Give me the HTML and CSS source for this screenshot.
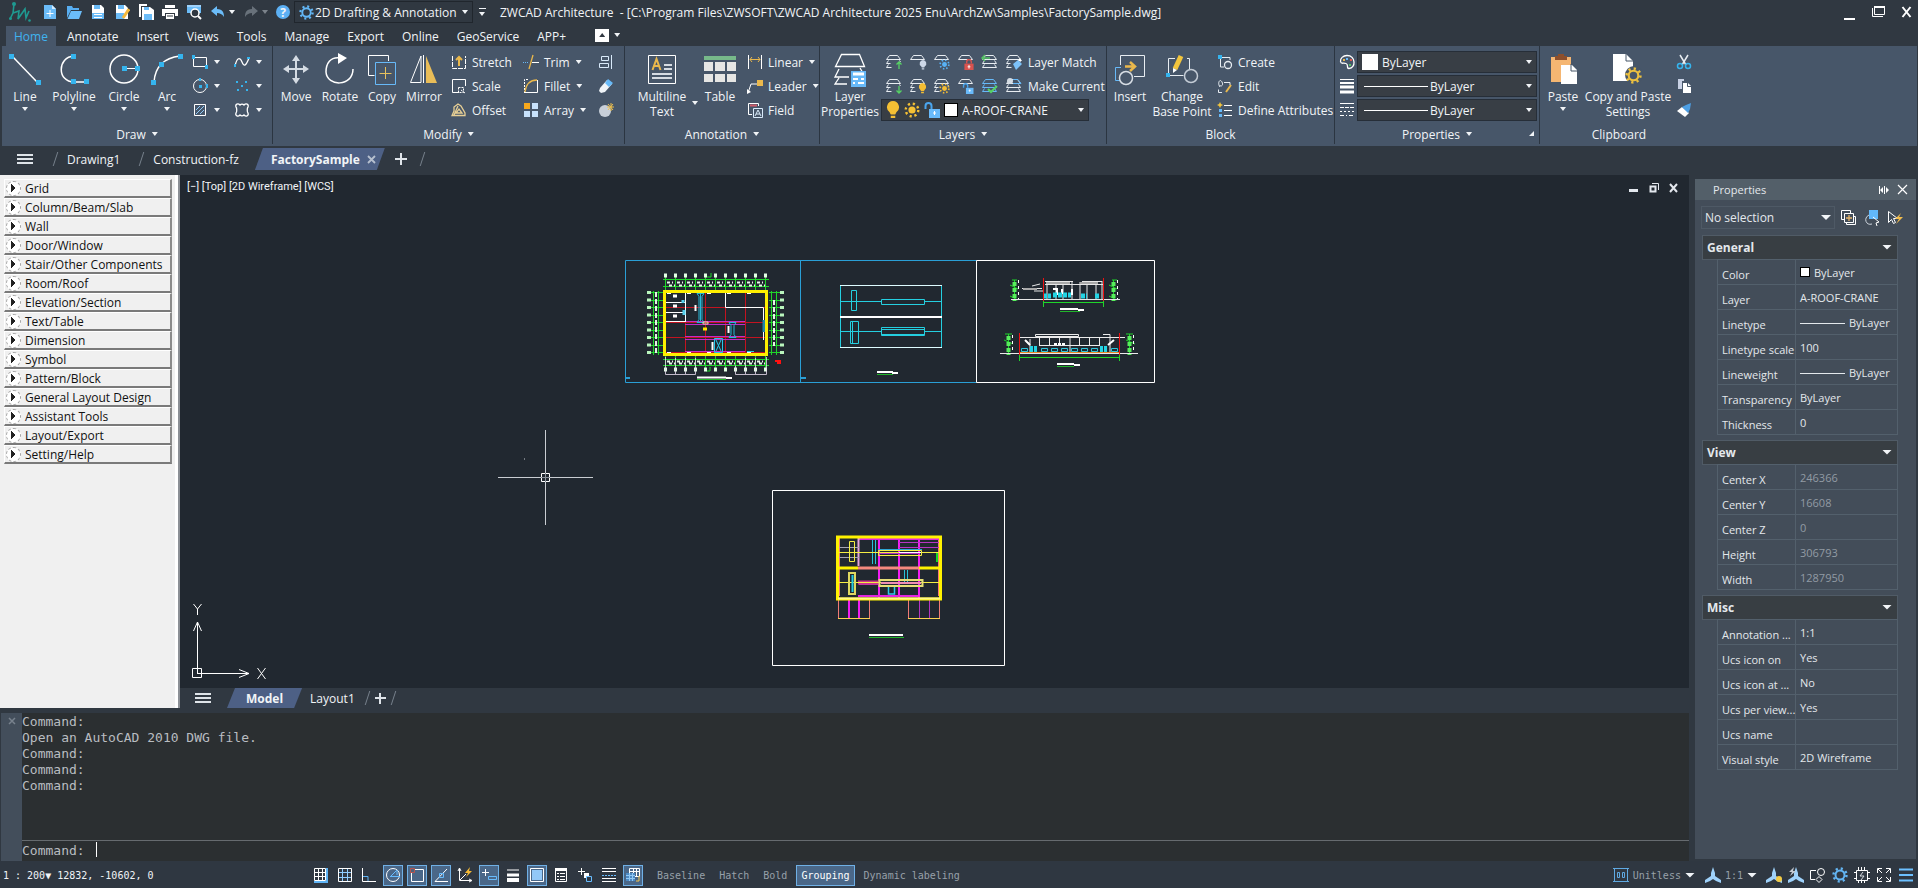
FILE: index.html
```html
<!DOCTYPE html>
<html lang="en">
<head>
    <meta charset="UTF-8">
    <meta name="viewport" content="width=device-width, initial-scale=1.0">
    <title>ZWCAD Architecture</title>
    <link rel="stylesheet" href="styles.css">
</head>
<body>
    <!-- shared symbols -->
    <svg class="defs" width="0" height="0">
        <symbol id="layers" viewBox="0 0 18 16">
            <path d="M4.5 1.5h8l3 4h-14zM3.5 6.500l-2 3h4M14.500 6.500l1 1.500M3.500 10.500l-2 3h5" fill="none" stroke="#e8edf2"/>
        </symbol>
        <symbol id="layers-full" viewBox="0 0 18 16">
            <path d="M4.500 1.500h8l3 4h-14zM3.500 6.500l-2 3h14l-2-3M3.500 10.500l-2 3h14l-2-3" fill="none" stroke="currentColor"/>
        </symbol>
        <symbol id="gear" viewBox="0 0 16 16">
            <circle cx="8" cy="8" r="4.500" fill="none" stroke="currentColor" stroke-width="2"/>
            <circle cx="8" cy="8" r="6.500" fill="none" stroke="currentColor" stroke-width="2.400" stroke-dasharray="2.100 3"/>
        </symbol>
        <symbol id="sun" viewBox="0 0 16 16">
            <circle cx="8" cy="8" r="3.600" fill="currentColor"/>
            <circle cx="8" cy="8" r="6.300" fill="none" stroke="currentColor" stroke-width="2.400" stroke-dasharray="2.200 2.750"/>
        </symbol>
        <symbol id="bulb" viewBox="0 0 12 16">
            <path d="M6 0a5.500 5.500 0 0 0-3 10l1 2h4l1-2a5.500 5.500 0 0 0-3-10zM4 13h4v2H4z" fill="currentColor"/>
        </symbol>
        <symbol id="lock" viewBox="0 0 10 12">
            <path d="M2.500 5V3a2.500 2.500 0 0 1 5 0v2" fill="none" stroke="currentColor" stroke-width="1.500"/>
            <path d="M0 5h10v7H0z" fill="currentColor"/><path d="M5 6.500v4M3.500 8.500h3" stroke="#fff"/>
        </symbol>
        <symbol id="unlock" viewBox="0 0 16 16">
            <path d="M1.500 7V4a3 3 0 0 1 6 0v3" fill="none" stroke="#4aa5ee" stroke-width="2"/>
            <path d="M5 7h11v9H5z" fill="#69bafa"/><path d="M10.500 9v4M9 11h3" stroke="#fff"/>
        </symbol>
        <symbol id="scale-man" viewBox="0 0 16 16">
            <path d="M8 0l2 6v3l6 4v3l-5-2-3-2-3 2-5 2v-3l6-4V6z" fill="#9fd2fb"/>
        </symbol>
    </svg>

    <header class="titlebar">
        <svg class="logo" width="24" height="22" viewBox="0 0 24 22"><path d="M6 3l-1 9-3 6M5 12l6-2-1 8 7-10 1 9 3-7" fill="none" stroke="#1f9a91" stroke-width="1.600"/><circle cx="6" cy="3" r="2" fill="#1f9a91"/><circle cx="2.500" cy="17.500" r="1.500" fill="#1f9a91"/><circle cx="21.500" cy="19.500" r="1.300" fill="#1f9a91"/></svg>
        <nav class="quick">
            <button aria-label="New"><svg width="16" height="16"><path d="M2 1h8l4 4v10H2z" fill="#6bbcf8"/><path d="M10 1v4h4" fill="#d6ecff"/><path d="M8 6v7M4.500 9.500h7" stroke="#fff"/></svg></button>
            <button aria-label="Open"><svg width="16" height="16"><path d="M1 2h5l1 2h6v2H5l-4 8z" fill="#57aef2"/><path d="M5 7h11l-3 8H1.500z" fill="#6bbcf8"/></svg></button>
            <button aria-label="Save"><svg width="16" height="16"><path d="M2 1h9l3 3v11H2z" fill="#fff"/><path d="M4 1h6v4H4zM2 9h12v6H2z" fill="#6bbcf8"/><path d="M4 10h8v1H4zM4 13h8v1H4z" fill="#fff"/></svg></button>
            <button aria-label="Save as"><svg width="16" height="16"><path d="M2 1h9l3 3v11H2z" fill="#fff"/><path d="M4 1h6v4H4zM2 9h8v6H2z" fill="#6bbcf8"/><path d="M15 5l-6 9" stroke="#f5b93c" stroke-width="3"/></svg></button>
            <button aria-label="Save all"><svg width="16" height="16"><path d="M1 0h8v2H3v11H1z" fill="#fff"/><path d="M4 3h8l4 3v10H4z" fill="#fff"/><path d="M6 3h5v3H6zM6 10h8v6H6z" fill="#6bbcf8"/></svg></button>
            <button aria-label="Print"><svg width="16" height="16"><path d="M3 1h10v3H3zM0 5h16v7h-3V9H3v3H0z" fill="#fff"/><path d="M4 10h8v5H4z" fill="#fff"/><path d="M5 12h6" stroke="#303841"/></svg></button>
            <button aria-label="Print preview"><svg width="16" height="16"><path d="M1 1h14v8H1z" fill="#6bbcf8"/><path d="M1 1h14v2H1z" fill="#9fd2fb"/><circle cx="9" cy="9" r="4" fill="#303841" stroke="#fff" stroke-width="1.500"/><path d="M12 12l3 3" stroke="#fff" stroke-width="2"/></svg></button>
            <button aria-label="Undo"><svg width="16" height="16"><path d="M1 7l6-5v3c6 0 7 4 7 8-2-3-4-4-7-4v3z" fill="#6bbcf8"/></svg></button>
            <i class="tri"></i>
            <button aria-label="Redo"><svg width="16" height="16"><path d="M15 7L9 2v3C3 5 2 9 2 13c2-3 4-4 7-4v3z" fill="#68717a"/></svg></button>
            <i class="tri dim"></i>
            <button class="help" aria-label="Help">?</button>
        </nav>
        <div class="workspace">
            <svg width="15" height="15" color="#63b8f8"><use href="#gear"/></svg>
            <select aria-label="Workspace"><option>2D Drafting &amp; Annotation</option></select>
            <i class="tri"></i>
        </div>
        <button class="more" aria-label="Customize"><i></i><i class="tri"></i></button>
        <h1>ZWCAD Architecture&nbsp; - [C:\Program Files\ZWSOFT\ZWCAD Architecture 2025 Enu\ArchZw\Samples\FactorySample.dwg]</h1>
        <div class="win">
            <button aria-label="Minimize"><svg width="14" height="16"><path d="M1 14h11v2H1z" fill="#fff"/></svg></button>
            <button aria-label="Restore"><svg width="14" height="14"><path d="M2.500 1.500h10v8h-10z" fill="none" stroke="#fff"/><path d="M2 1h11v2H2z" fill="#fff"/><path d="M.5 3v8.500H11" fill="none" stroke="#fff"/></svg></button>
            <button aria-label="Close"><svg width="12" height="12"><path d="M1.500 1l8 10M9.500 1l-8 10" stroke="#fff" stroke-width="2"/></svg></button>
        </div>
    </header>

    <nav class="menu">
        <button class="active">Home</button>
        <button>Annotate</button>
        <button>Insert</button>
        <button>Views</button>
        <button>Tools</button>
        <button>Manage</button>
        <button>Export</button>
        <button>Online</button>
        <button>GeoService</button>
        <button>APP+</button>
        <button class="fold" aria-label="Collapse ribbon"><i class="tri up"></i></button>
        <i class="tri"></i>
    </nav>

    <section class="ribbon">
        <div class="group draw">
            <div class="tools">
                <button class="big w46"><svg width="32" height="32"><path d="M3 3l26 27" stroke="#fff" stroke-width="1.500"/><path d="M0 1h5v5H0zM27 27h5v5h-5z" fill="#35b4ee"/></svg>Line<i class="tri"></i></button>
                <button class="big w52"><svg width="32" height="32"><path d="M16 3C-1 4-1 29 16 29h12" fill="none" stroke="#fff" stroke-width="1.500"/><path d="M13 1h5v5h-5zM13 26h5v5h-5zM26 26h5v5h-5z" fill="#35b4ee"/></svg>Polyline<i class="tri"></i></button>
                <button class="big w48"><svg width="32" height="32"><circle cx="16" cy="16" r="14" fill="none" stroke="#fff" stroke-width="1.500"/><path d="M15 15.500h13" stroke="#fff"/><path d="M14 13h5v5h-5zM27 13h5v5h-5z" fill="#35b4ee"/></svg>Circle<i class="tri"></i></button>
                <button class="big w38"><svg width="32" height="32"><path d="M3 29C4 15 12 5 29 3" fill="none" stroke="#fff" stroke-width="1.500"/><path d="M0 27h5v5H0zM8 9h5v5H8zM27 1h5v5h-5z" fill="#35b4ee"/></svg>Arc<i class="tri"></i></button>
                <div class="stack pairs">
                    <button aria-label="Rectangle"><svg width="16" height="16"><path d="M1.500 3.500h13v9h-13z" fill="none" stroke="#fff"/><path d="M0 1h3v4H0zM13 11h3v4h-3z" fill="#35b4ee"/></svg><i class="tri"></i></button>
                    <button aria-label="Ellipse"><svg width="16" height="16"><circle cx="8" cy="8" r="6.500" fill="none" stroke="#fff"/><path d="M7 7h3v3H7zM14 6h2v4h-2zM7 0h2v3H7z" fill="#35b4ee"/></svg><i class="tri"></i></button>
                    <button aria-label="Hatch"><svg width="16" height="16"><path d="M2.500 2.500h11v11h-11z" fill="none" stroke="#fff"/><path d="M4 8l4-4M4 12l8-8M8 12l4-4" stroke="#8fc9f7"/></svg><i class="tri"></i></button>
                </div>
                <div class="stack pairs">
                    <button aria-label="Spline"><svg width="16" height="16"><path d="M1 12C3 3 6 3 8 8s4 4 7-4" fill="none" stroke="#fff" stroke-width="1.300"/><path d="M0 10h2v3H0zM13 3h3v2h-3z" fill="#35b4ee"/></svg><i class="tri"></i></button>
                    <button aria-label="Point"><svg width="16" height="16"><path d="M2 3h2v2H2zM11 3h2v2h-2zM7 7h2v2H7zM3 11h2v2H3zM12 11h2v2h-2z" fill="#35b4ee"/></svg><i class="tri"></i></button>
                    <button aria-label="Revision cloud"><svg width="16" height="16"><path d="M2 5c-1-3 2-4 4-2 1-1 3-1 4 0 2-2 5-1 4 2-1 1-1 5 0 6 1 3-2 4-4 2-1 1-3 1-4 0-2 2-5 1-4-2 1-1 1-5 0-6z" fill="none" stroke="#fff" stroke-width="1.300"/></svg><i class="tri"></i></button>
                </div>
            </div>
            <h2>Draw<i class="tri"></i></h2>
        </div>

        <div class="group modify">
            <div class="tools">
                <button class="big w46"><svg width="32" height="32"><path d="M16 5v23M5 16h22" stroke="#d4dbe3" stroke-width="2"/><path d="M16 2l4 6h-8zM16 31l4-6h-8zM3 16l6-4v8zM29 16l-6-4v8z" fill="#d4dbe3"/></svg>Move</button>
                <button class="big w42"><svg width="32" height="32"><path d="M17 5C6 3 2 11 2 19c1 15 27 15 27-3" fill="none" stroke="#fff" stroke-width="1.500"/><path d="M14 0l9 5-9 6z" fill="#fff"/></svg>Rotate</button>
                <button class="big w42"><svg width="32" height="32"><path d="M22.500 8V2.500h-20v20h6" fill="none" stroke="#fff"/><path d="M9.500 9.500h20v22h-20z" fill="none" stroke="#67b9f8"/><path d="M19.500 14v12M13.500 20.500h12" stroke="#e6c15d"/></svg>Copy</button>
                <button class="big w42"><svg width="32" height="32"><path d="M13 3L2.500 29.500H13zM15.500 2v28" fill="none" stroke="#fff"/><path d="M18 3l11 27H18z" fill="#e9bd58"/></svg>Mirror</button>
                <div class="stack w72">
                    <button><svg width="16" height="16"><path d="M1.500 2v12.500h13V2" fill="none" stroke="#fff" stroke-dasharray="5 1"/><path d="M8 3v9M5 6l3-3 3 3" fill="none" stroke="#eab84c" stroke-width="2"/></svg>Stretch</button>
                    <button><svg width="16" height="16"><path d="M1.500 10V1.500h13V8M1.500 9v5.500H8" fill="none" stroke="#fff"/><path d="M7.500 9.500h5v5h-5zM10 12l4 3" fill="none" stroke="#fff" stroke-dasharray="2 1"/></svg>Scale</button>
                    <button><svg width="16" height="16"><path d="M1 13.500h13V11L10 4 7 2 3 5v4zM5 11h6l-3-4zM3 13l4-9" fill="none" stroke="#e7cf95" stroke-width="1.300"/></svg>Offset</button>
                </div>
                <div class="stack w75">
                    <button><svg width="16" height="16"><path d="M0 8.500h6" stroke="#67b9f8" stroke-dasharray="1 1"/><path d="M9 8.500h7" stroke="#fff"/><path d="M10 1L6 15" stroke="#eab84c" stroke-width="1.300"/></svg>Trim<i class="tri"></i></button>
                    <button><svg width="16" height="16"><path d="M1.500 15V1.500H5M14.500 3v11.500H10" fill="none" stroke="#fff" stroke-dasharray="2 1"/><path d="M2 14C3 6 7 2 14 2" fill="none" stroke="#eab84c" stroke-width="1.300"/><path d="M14.500 2v12.500H2" fill="none" stroke="#fff"/></svg>Fillet<i class="tri"></i></button>
                    <button><svg width="16" height="16"><path d="M1 1h6v6H1z" fill="#f7a81c"/><path d="M9 1h6v6H9zM1 9h6v6H1zM9 9h6v6H9z" fill="#c7e1fb"/></svg>Array<i class="tri"></i></button>
                </div>
                <div class="stack">
                    <button aria-label="Align"><svg width="16" height="16"><path d="M3.500 2.500h7v4h-7zM1.500 9.500h9v4h-9zM13.500 1v14" fill="none" stroke="#d9eafa"/></svg></button>
                    <button aria-label="Erase"><svg width="16" height="16"><path d="M2 10l7-8 5 4-7 8-4 1-2-2z" fill="#f0f4f8"/><path d="M7 5l3-4 5 4-4 4z" fill="#67b9f8"/></svg></button>
                    <button aria-label="Explode"><svg width="16" height="16"><circle cx="7" cy="9" r="6" fill="#c8cfd9"/><path d="M13 1v8M9 5h7M10 2l5 6M15 2l-5 6" stroke="#eec04e"/></svg></button>
                </div>
            </div>
            <h2>Modify<i class="tri"></i></h2>
        </div>

        <div class="group annotation">
            <div class="tools">
                <button class="big w58"><svg width="32" height="32"><path d="M2.500 2.500h27v28h-27z" fill="none" stroke="#fff"/><path d="M6.500 17l4-11 4 11M8 13h5" fill="none" stroke="#eab84c" stroke-width="2"/><path d="M18 12h8M18 16h8M6 21h20M6 25h20" stroke="#d5dbe2" stroke-width="2"/></svg>Multiline<br>Text</button>
                <button class="split" aria-label="Text options"><i class="tri"></i></button>
                <button class="big w42"><svg width="32" height="32"><path d="M0 3h32v4H0z" fill="#77b98a"/><path d="M0 9h9v9H0zM11 9h10v9H11zM23 9h9v9h-9zM0 21h9v8H0zM11 21h10v8H11zM23 21h9v8h-9z" fill="#e6e6e4"/></svg>Table</button>
                <div class="stack">
                    <button><svg width="16" height="16"><path d="M1.500 1v14M14.500 1v14" stroke="#fff"/><path d="M3 5.500h10M5 3L3 5.500 5 8M11 3l2 2.500L11 8" fill="none" stroke="#eab84c"/></svg>Linear<i class="tri"></i></button>
                    <button><svg width="16" height="16"><path d="M1 15l3-9h6" fill="none" stroke="#fff"/><path d="M0 11l4 3-4 2z" fill="#fff"/><path d="M10 2h6v6h-6z" fill="#eab84c"/></svg>Leader<i class="tri"></i></button>
                    <button><svg width="16" height="16"><path d="M5 12.500H1.500v-11h10V4" fill="none" stroke="#fff"/><path d="M3 3.500h7" stroke="#d15b6b" stroke-width="2"/><path d="M6.500 6.500h9v9h-9zM8 14l3-6 3 6M9 12h4" fill="none" stroke="#d9eafa"/></svg>Field</button>
                </div>
            </div>
            <h2>Annotation<i class="tri"></i></h2>
        </div>

        <div class="group layer">
            <div class="tools">
                <button class="big w60"><svg width="32" height="34"><path d="M7.500 1.500h18l5 12H1.500zM5 16l-4 8h14M5 25l-4 6h12M26 15l3 5" fill="none" stroke="#fff" stroke-width="1.300"/><path d="M17 18h15v16H17z" fill="#67b9f8"/><path d="M19 21h11" stroke="#fff" stroke-width="3"/><path d="M19 26h5M27 26h3M19 30h2M24 30h6" stroke="#fff" stroke-width="2"/></svg>Layer<br>Properties</button>
                <div class="stack">
                    <div class="iconrow">
                        <button aria-label="Previous layer"><svg width="18" height="16"><use href="#layers"/><path d="M14 15V8M11.500 10.500L14 8l2.500 2.500" fill="none" stroke="#56d364" stroke-width="1.300"/></svg></button>
                        <button aria-label="Layer off"><svg width="18" height="16"><path d="M4.500 1.500h8l3 4h-14z" fill="none" stroke="#e8edf2"/><use href="#bulb" x="10" y="6" width="8" height="10" color="#cdd8e8"/></svg></button>
                        <button aria-label="Layer freeze"><svg width="18" height="16"><path d="M4.500 1.500h8l3 4h-14z" fill="none" stroke="#e8edf2"/><use href="#sun" x="6" y="5" width="11" height="11" color="#58b2f5"/></svg></button>
                        <button aria-label="Layer lock"><svg width="18" height="16"><path d="M4.500 1.500h8l3 4h-14z" fill="none" stroke="#e8edf2"/><use href="#lock" x="7" y="5" width="10" height="11" color="#d9534f"/></svg></button>
                        <button aria-label="Isolate"><svg width="18" height="16" color="#e8edf2"><use href="#layers-full"/><path d="M2 4h7M4 1L1 4l3 3" fill="none" stroke="#56c364" stroke-width="1.500"/></svg></button>
                        <button class="label"><svg width="18" height="16"><use href="#layers"/><path d="M8 10l5-4 4 4-6 6z" fill="#7cc2fa"/><path d="M13 7l2-3 2 3z" fill="#fff"/></svg>Layer Match</button>
                    </div>
                    <div class="iconrow">
                        <button aria-label="Next layer"><svg width="18" height="16"><use href="#layers"/><path d="M14 8v7M11.500 12.500L14 15l2.500-2.500" fill="none" stroke="#56d364" stroke-width="1.300"/></svg></button>
                        <button aria-label="Layer on"><svg width="18" height="16"><use href="#layers"/><use href="#bulb" x="9" y="5" width="9" height="11" color="#f5be33"/></svg></button>
                        <button aria-label="Layer thaw"><svg width="18" height="16"><use href="#layers"/><use href="#sun" x="6" y="5" width="11" height="11" color="#f5be33"/></svg></button>
                        <button aria-label="Layer unlock"><svg width="18" height="16"><path d="M4.500 1.500h8l3 4h-14z" fill="none" stroke="#e8edf2"/><use href="#unlock" x="5" y="5" width="12" height="11"/></svg></button>
                        <button aria-label="Layer walk"><svg width="18" height="16" color="#67b9f8"><use href="#layers-full"/><path d="M7 11l3 3 6-6" fill="none" stroke="#56d364" stroke-width="2"/></svg></button>
                        <button class="label"><svg width="18" height="16" color="#e8edf2"><use href="#layers-full"/><circle cx="5" cy="3" r="3" fill="#d4dbe3"/><path d="M8 1.500h5l3 4H8" fill="none" stroke="#67b9f8"/></svg>Make Current</button>
                    </div>
                    <div class="combo layers-combo">
                        <svg width="14" height="18" color="#f5c034"><use href="#bulb"/></svg>
                        <svg width="16" height="16" color="#f5c034"><use href="#sun"/></svg>
                        <svg width="16" height="16"><use href="#unlock"/></svg>
                        <span class="swatch"></span>
                        <select aria-label="Layer"><option>A-ROOF-CRANE</option></select>
                        <i class="tri"></i>
                    </div>
                </div>
            </div>
            <h2>Layers<i class="tri"></i></h2>
        </div>

        <div class="group block">
            <div class="tools">
                <button class="big w46"><svg width="32" height="32"><path d="M6.500 12V2.500h24v21H20" fill="none" stroke="#e8edf2"/><path d="M7 14.500H1.500v13H6" fill="none" stroke="#67b9f8"/><path d="M11 13.500h9M16 9l5 4.500-5 4.500" fill="none" stroke="#eab84c" stroke-width="2.500"/><circle cx="12" cy="25" r="6.500" fill="#475669" stroke="#d8dee5" stroke-width="1.500"/></svg>Insert</button>
                <button class="big w58"><svg width="32" height="32"><path d="M9 5.500H2.500v17h15M21 5.500h2.500V16" fill="none" stroke="#e8edf2"/><circle cx="25" cy="23" r="6.500" fill="none" stroke="#c4ccd6" stroke-width="1.500"/><path d="M15 3L9 16" stroke="#f2c53d" stroke-width="5"/><path d="M7 15l4 2-4 3z" fill="#fff"/><path d="M0 20h4v4H0z" fill="#35b4ee"/></svg>Change<br>Base Point</button>
                <div class="stack">
                    <button><svg width="16" height="16"><path d="M3.500 4v9H7M5 3.500h8V6" fill="none" stroke="#e8edf2"/><path d="M1 1h4v4H1z" fill="#35b4ee"/><circle cx="11" cy="11" r="3.500" fill="none" stroke="#e8edf2" stroke-width="1.300"/></svg>Create</button>
                    <button><svg width="16" height="16"><path d="M5 14.500H1.500v-3M7 4.500h6V7M3 9c-3-4 0-9 2-5s-2 5-2 3" fill="none" stroke="#e8edf2"/><path d="M14 7l-5 7" stroke="#eab84c" stroke-width="2"/></svg>Edit</button>
                    <button><svg width="16" height="16"><path d="M7 3.500h8M7 8.500h8M7 13.500h8" stroke="#fff"/><path d="M3 0l1 2 2 1-2 1-1 2-1-2-2-1 2-1z" fill="#f2c53d"/><path d="M2 7h3v3H2zM2 12h3v3H2z" fill="#67b9f8"/></svg>Define Attributes</button>
                </div>
            </div>
            <h2>Block</h2>
        </div>

        <div class="group props">
            <div class="tools">
                <div class="stack">
                    <div class="proprow">
                        <svg width="16" height="16"><path d="M8 1.500c9 0 9 13 2 13-3 0 0-4-3-5s-5 1-5.500-2S4 1.500 8 1.500z" fill="none" stroke="#fff" stroke-width="1.300"/><path d="M7 4h2v2H7z" fill="#67b9f8"/><path d="M11 5h2v2h-2z" fill="#e0594f"/><path d="M10 10h2v2h-2z" fill="#56c364"/><path d="M4 5h2v2H4z" fill="#eab84c"/></svg>
                        <div class="combo"><span class="swatch wide"></span><select aria-label="Color"><option>ByLayer</option></select><i class="tri"></i></div>
                    </div>
                    <div class="proprow">
                        <svg width="16" height="16"><path d="M1 1.500h14" stroke="#fff"/><path d="M1 5h14" stroke="#fff" stroke-width="2"/><path d="M1 9h14M1 14h14" stroke="#fff" stroke-width="3"/></svg>
                        <div class="combo"><span class="line"></span><select aria-label="Lineweight"><option>ByLayer</option></select><i class="tri"></i></div>
                    </div>
                    <div class="proprow">
                        <svg width="16" height="16"><path d="M1 1.500h14" stroke="#fff"/><path d="M1 5.500h14" stroke="#fff" stroke-dasharray="4 1"/><path d="M1 9.500h14" stroke="#fff" stroke-dasharray="2 2"/><path d="M1 13.500h14" stroke="#fff" stroke-dasharray="4 2 1 2"/></svg>
                        <div class="combo"><span class="line"></span><select aria-label="Linetype"><option>ByLayer</option></select><i class="tri"></i></div>
                    </div>
                </div>
            </div>
            <h2>Properties<i class="tri"></i><i class="corner"></i></h2>
        </div>

        <div class="group clip">
            <div class="tools">
                <button class="big w46"><svg width="32" height="32"><path d="M4 4h20v25H4z" fill="#f5b672"/><path d="M8 3h3V1h6v2h3v4H8z" fill="#8d4f2b"/><path d="M14 12h11l5 5v14H14z" fill="#fff"/><path d="M24 11v7h6" fill="none" stroke="#475669"/></svg>Paste<i class="tri"></i></button>
                <button class="big w84"><svg width="32" height="32"><path d="M1 1h13l7 7v20H1z" fill="#fff"/><path d="M14 1v7h7" fill="none" stroke="#475669"/><circle cx="22" cy="22" r="9" fill="#475669"/><use href="#gear" x="13" y="14" width="17" height="17" color="#ecc040"/></svg>Copy and Paste<br>Settings</button>
                <div class="stack">
                    <button aria-label="Cut"><svg width="16" height="16"><path d="M4 1l6 10M12 1L6 11" stroke="#e8edf2" stroke-width="1.500"/><circle cx="4" cy="12" r="2.500" fill="none" stroke="#35b4ee" stroke-width="1.500"/><circle cx="12" cy="12" r="2.500" fill="none" stroke="#35b4ee" stroke-width="1.500"/></svg></button>
                    <button aria-label="Copy clip"><svg width="16" height="16"><path d="M2 1h6v2H6v8H2z" fill="#c7d0e4"/><path d="M7 5h5l3 3v7H7z" fill="#fff"/><path d="M11.500 5v3.500H15" fill="none" stroke="#475669"/></svg></button>
                    <button aria-label="Match properties"><svg width="16" height="16"><path d="M1 9l5-4 7 6-4 4z" fill="#fff"/><path d="M6 5l4-2 5-2-1 6-2 4z" fill="#4c9ee3"/></svg></button>
                </div>
            </div>
            <h2>Clipboard</h2>
        </div>
    </section>

    <nav class="tabs">
        <button class="burger" aria-label="Drawings"></button>
        <i class="slash"></i>
        <button class="tab">Drawing1</button>
        <i class="slash"></i>
        <button class="tab">Construction-fz</button>
        <button class="tab active">FactorySample<svg width="9" height="9"><path d="M1 1l7 7M8 1L1 8" stroke="#b6c0cf" stroke-width="1.800"/></svg></button>
        <button class="plus" aria-label="New drawing"></button>
        <i class="slash"></i>
    </nav>

    <main>
        <div class="work">
            <div class="view">
                <aside class="side">
                    <ul>
                        <li><button>Grid</button></li>
                        <li><button>Column/Beam/Slab</button></li>
                        <li><button>Wall</button></li>
                        <li><button>Door/Window</button></li>
                        <li><button>Stair/Other Components</button></li>
                        <li><button>Room/Roof</button></li>
                        <li><button>Elevation/Section</button></li>
                        <li><button>Text/Table</button></li>
                        <li><button>Dimension</button></li>
                        <li><button>Symbol</button></li>
                        <li><button>Pattern/Block</button></li>
                        <li><button>General Layout Design</button></li>
                        <li><button>Assistant Tools</button></li>
                        <li><button>Layout/Export</button></li>
                        <li><button>Setting/Help</button></li>
                    </ul>
                </aside>
                <div class="model">
                    <div class="canvas">
                        <div class="canvas-head">
                            <span>[−] [Top] [2D Wireframe] [WCS]</span>
                            <div class="docwin">
                                <button aria-label="Minimize drawing"><svg width="12" height="12"><path d="M1 7h9v3H1z" fill="#e4e8ee"/></svg></button>
                                <button aria-label="Restore drawing"><svg width="12" height="12"><path d="M2.500 4.500h5v5h-5z" fill="none" stroke="#e4e8ee" stroke-width="2"/><path d="M4 1.500h6.500V8" fill="none" stroke="#e4e8ee"/></svg></button>
                                <button aria-label="Close drawing"><svg width="12" height="12"><path d="M2 2l7 8M9 2l-7 8" stroke="#e4e8ee" stroke-width="2"/></svg></button>
                            </div>
                        </div>
                        <svg class="drawing" width="1509" height="513" viewBox="180 175 1509 513" fill="none">
                            <!-- sheet frames -->
                            <path d="M625.500 260.500h351v122h-351zM800.500 260v122" stroke="#2a9fd6"/>
                            <path d="M626 378h4M801 378h5" stroke="#2a9fd6" stroke-width="2"/>
                            <path d="M976.500 260.500h178v122h-178z" stroke="#fff"/>
                            <path d="M772.500 490.500h232v175h-232z" stroke="#fff"/>

                            <!-- floor plan -->
                            <g stroke="#c31320">
                                <path d="M665 307.500h102M665 322.500h102M665 337.500h102M665 352.500h102M685.500 292v62M705.500 292v62M725.500 292v62M745.500 292v62"/>
                            </g>
                            <path d="M685 321.500h60M685 324.500h60M685 336.500h60M685 339.500h60M685 351.500h60" stroke="#c42bc8"/>
                            <g stroke="#1fd62a">
                                <path d="M665.500 275v16M675.500 275v16M685.500 275v16M695.500 275v16M705.500 275v16M715.500 275v16M725.500 275v16M735.500 275v16M745.500 275v16M755.500 275v16M765.500 275v16"/>
                                <path d="M665.500 356v13M675.500 356v13M685.500 356v13M695.500 356v13M705.500 356v13M715.500 356v13M725.500 356v13M735.500 356v13M745.500 356v13M755.500 356v13M765.500 356v13"/>
                                <path d="M663 279.500h106M663 286.500h106M663 359.500h106M663 365.500h106"/>
                                <path d="M649 292.500h14M649 300.500h14M649 307.500h14M649 315.500h14M649 322.500h14M649 330.500h14M649 337.500h14M649 345.500h14M649 352.500h14"/>
                                <path d="M769 292.500h13M769 300.500h13M769 307.500h13M769 315.500h13M769 322.500h13M769 330.500h13M769 337.500h13M769 345.500h13M769 352.500h13"/>
                                <path d="M653.500 291v64M658.500 291v64M771.500 291v64M776.500 291v64M711 273v4h-4M710 367v4h-4"/>
                            </g>
                            <path d="M664 275.500h104M664 369.500h104" stroke="#e4ffe6" stroke-width="4" stroke-dasharray="3 7"/>
                            <path d="M649 291v65M782 291v65" stroke="#b9f5bd" stroke-width="4" stroke-dasharray="3 4.500"/>
                            <path d="M667 282.500h100M669 285.500h98M667 361.500h100M669 363.500h98" stroke="#eaf8ea" stroke-width="2" stroke-dasharray="3 2 1 4"/>
                            <path d="M656 292v62M774 300v46" stroke="#e6f5e6" stroke-width="2" stroke-dasharray="5 2"/>
                            <path d="M665.500 357v17.500h30V358M675.500 358v16M685.500 358v16M735.500 374.500v-9M735.500 374.500h31V357M745.500 358v16M755.500 358v16" stroke="#e8dcef" stroke-opacity=".8"/>
                            <path d="M665 302.500h20M665 312.500h20M665 321.500h20M685.500 292v30M725.500 292v15.500h38V340" stroke="#fff"/>
                            <path d="M673 296h4M673 306h4M673 316h4" stroke="#fff" stroke-width="3"/>
                            <path d="M683 300v3M684 310v5" stroke="#55cfec" stroke-width="3"/>
                            <path d="M697 293.500h7l-2 3v23l2 3h-7l2-3v-23zM700.500 294v27M729 322.500h7l-2 3v9l2 3h-7l2-3v-9z" stroke="#28b8d8"/>
                            <path d="M714.500 338.500h8v14h-8zM716 340l5 11M721 340l-5 11M747 351.500h7" stroke="#28c8e8"/>
                            <path d="M764 320v12" stroke="#2585a8" stroke-width="3"/>
                            <path d="M695.500 305v6M728.500 326v7M712.500 342v8" stroke="#fff" stroke-width="2"/>
                            <path d="M703 322h5v2h-5z" stroke="#f3d6a5"/>
                            <path d="M703 329h4" stroke="#ffea00" stroke-width="3"/>
                            <path d="M664.500 291.500h102v63h-102z" stroke="#ffef00" stroke-width="3"/>
                            <path d="M667 293.500h98M667 352.500h98" stroke="#fff" stroke-dasharray="4 16"/>
                            <path d="M775 360h6v4h-4v-2h-2z" fill="#f11"/>
                            <path d="M697 377.500h29M726 378h6" stroke="#fff" stroke-width="2"/>
                            <path d="M697 379.500h29" stroke="#21b52a"/>

                            <!-- roof plan -->
                            <path d="M840.500 286v62M941.500 286v62M840 301.500h41M925 301.500h17M840 331.500h41M925 331.500h17M851.500 290.500h5v20h-5zM881.500 299.500h43v5h-43zM850.500 321.500h8v22h-8zM852.500 322v21M881.500 327.500h43v8h-43zM881 329.500h43M881 334.500h43" stroke="#25cfe0"/>
                            <path d="M840 285.500h102M840 347.500h102" stroke="#dffcff"/>
                            <path d="M840 317h102" stroke="#fff" stroke-width="2"/>
                            <path d="M877 372h16M892 373h6" stroke="#fff" stroke-width="2"/>
                            <path d="M877 374.500h16" stroke="#21b52a"/>

                            <!-- upper elevation -->
                            <path d="M1012 280h5M1014.500 280v20M1010 285l8 4M1010 296l8 4M1112 280h5M1113.500 280v20M1109 285l8 4M1109 296l8 4" stroke="#1fd62a"/>
                            <path d="M1014.500 282v19M1113.500 282v19" stroke="#57ee5c" stroke-width="4" stroke-dasharray="4 2"/>
                            <path d="M1018.500 280v20M1117.500 280v20" stroke="#fff" stroke-dasharray="3 3"/>
                            <path d="M1011 299.500h109M1022 288.500h20M1032 286l8-2M1034 291h10M1045 281.500h28M1045 284.500h58M1047 281v18M1056 284v15M1063 284v15M1072 282v17M1080 282v17M1082 281.500h20M1087 284v15M1096 284v15M1102 281v18" stroke="#e8e8e8"/>
                            <path d="M1046 283h24M1080 283h18M1023 289h14" stroke="#a9a9a9" stroke-width="2"/>
                            <path d="M1053 289h4v5h-4M1062 289v5M1072 289v6" stroke="#fff" stroke-width="2"/>
                            <path d="M1043 296h8M1053 295h18M1081 296h6M1095 296h5" stroke="#23d4e4" stroke-width="5" stroke-dasharray="4 1"/>
                            <path d="M1043.500 278v27M1103.500 278v27" stroke="#e11"/>
                            <path d="M1043 302.500h61M1043.500 301v6M1103.500 301v6" stroke="#1fd62a"/>
                            <path d="M1060 309h18M1078 310h6" stroke="#fff" stroke-width="2"/>
                            <path d="M1060 311.500h20" stroke="#21b52a"/>

                            <!-- lower elevation -->
                            <path d="M1008.500 334v21M1005 334h7M1004 340l9 4M1129.500 334v21M1126 334h7M1126 340l9 4" stroke="#1fd62a"/>
                            <path d="M1008.500 336v19M1129.500 336v19" stroke="#57ee5c" stroke-width="4" stroke-dasharray="4 2"/>
                            <path d="M1012.500 335v18M1133.500 335v18" stroke="#fff" stroke-dasharray="3 3"/>
                            <path d="M1000 353.500h138M1035.500 334.500h43v2h-43zM1019 337.500h106M1040 345.500h60M1030 339v14M1039.500 338v8M1049.500 338v8M1059.500 338v8M1070 338v15M1079.500 338v8M1089.500 338v8M1099.500 338v8M1110 338v15M1103 334.500h7v3" stroke="#ebebeb"/>
                            <path d="M1025 340l5 5M1114 340l-6 5" stroke="#fff" stroke-width="2"/>
                            <path d="M1054 344h12" stroke="#fff" stroke-dasharray="3 1" stroke-width="2"/>
                            <path d="M1021.500 348.500h6v3h-6zM1041.500 348.500h6v3h-6zM1051.500 348.500h6v3h-6zM1061.500 348.500h6v3h-6zM1071.500 348.500h6v3h-6zM1081.500 348.500h6v3h-6zM1091.500 348.500h6v3h-6zM1111.500 348.500h6v3h-6z" stroke="#2cc7dd"/>
                            <path d="M1030 349h8M1100 349h8" stroke="#23d4e4" stroke-width="6" stroke-dasharray="3 1"/>
                            <path d="M1019 352.500h100" stroke="#e88827"/>
                            <path d="M1019.500 333v24M1119.500 333v24" stroke="#e11"/>
                            <path d="M1019 357.500h101M1019.500 355v6M1119.500 355v6" stroke="#1fd62a"/>
                            <path d="M1057 364h17M1074 365h6" stroke="#fff" stroke-width="2"/>
                            <path d="M1057 366.500h17" stroke="#21b52a"/>

                            <!-- combined plan -->
                            <path d="M838.500 600v18.500h31V600M908.500 600v18.500h31V600M839.500 538v58M938.500 538v58" stroke="#f27b76"/>
                            <path d="M838 618.500h32M908 618.500h32" stroke="#f7d54f"/>
                            <path d="M849 600v18M859 600v18M879 538v60M899 538v60M919 538v60" stroke="#f21df2" stroke-width="2"/>
                            <path d="M919.500 600v18M929.500 600v18M899 542.500h40M899 547.500h40M879 553.500h40M859 584.500h20" stroke="#b633c4"/>
                            <path d="M858 539h82M858 596h60" stroke="#e025df" stroke-width="2"/>
                            <path d="M858 582.500h22" stroke="#cc3585" stroke-width="4"/>
                            <path d="M858 568h61" stroke="#f58a7e" stroke-width="3"/>
                            <path d="M858.500 538v28" stroke="#e5a3dc" stroke-width="2"/>
                            <path d="M839 547.500h20M839 557.500h20" stroke="#a4a4b6"/>
                            <path d="M872.500 540v24M875.500 540v24M904.500 570v12M907.500 570v12" stroke="#27c4d8"/>
                            <path d="M849.500 541.500h5v20h-5zM839 552.500h100M878.500 550.500h43v5h-43zM839 582.500h100" stroke="#f4ee43"/>
                            <path d="M878 549.500h44" stroke="#2da7d6"/>
                            <path d="M899 552.500h22" stroke="#fff"/>
                            <path d="M849 573h6v21h-6z" stroke="#ded860" stroke-width="2"/>
                            <path d="M852.500 575v17" stroke="#25cce0" stroke-width="2"/>
                            <path d="M879.500 580h43v6h-43z" stroke="#e5df76" stroke-width="2"/>
                            <path d="M881 583h40" stroke="#ef8eb3" stroke-width="2"/>
                            <path d="M888.500 587v7h6v-7" stroke="#2ec9e6" stroke-width="1.500"/>
                            <path d="M837.500 537h103v62h-103zM837 568h21M919 568h21" stroke="#fff200" stroke-width="3"/>
                            <path d="M838 598.500h102" stroke="#fff68b" stroke-width="2"/>
                            <path d="M937 553v9" stroke="#12dd22" stroke-width="2"/>
                            <path d="M869 635h34" stroke="#fff" stroke-width="2"/>
                            <path d="M869 637.500h35" stroke="#21b52a"/>

                            <!-- crosshair -->
                            <path d="M498 477.500h43M550 477.500h43M545.500 430v43M545.500 482v43" stroke="#c9cdd2"/>
                            <path d="M541.500 473.500h8v8h-8z" stroke="#fff"/>
                            <path d="M541 477.500h9M545.500 473v9" stroke="#8c939b"/>
                            <path d="M524 459h1" stroke="#c9cdd2"/>

                            <!-- ucs icon -->
                            <path d="M192.500 668.500h9v9h-9zM197.500 673V622M193.500 631l4-9 4 9M197 673.500h52M239 669.500l10 4-10 4" stroke="#fff"/>
                            <path d="M193.500 604l4 5 4-5M197.500 609v6M257.500 668l8 11M265.500 668l-8 11" stroke="#fff"/>
                        </svg>
                    </div>
                    <nav class="tabs layouts">
                        <button class="burger" aria-label="Layouts"></button>
                        <button class="tab active">Model</button>
                        <button class="tab">Layout1</button>
                        <i class="slash"></i>
                        <button class="plus" aria-label="New layout"></button>
                        <i class="slash"></i>
                    </nav>
                </div>
            </div>
            <section class="command">
                <button class="grip" aria-label="Close command line"><svg width="8" height="8"><path d="M1 1l6 6M7 1L1 7" stroke="#78828d" stroke-width="1.500"/></svg></button>
                <div class="console">
                    <div class="log">Command:<br>Open an AutoCAD 2010 DWG file.<br>Command:<br>Command:<br>Command:</div>
                    <div class="prompt"><label for="cmd">Command:</label><input id="cmd" type="text"></div>
                </div>
            </section>
        </div>

        <aside class="palette">
            <header>
                <h2>Properties</h2>
                <button aria-label="Auto-hide"><svg width="10" height="10"><path d="M.5 1v8M5.500 1v8" stroke="#fff"/><path d="M4 2v6L1 5zM7 2v6l3-3z" fill="#fff"/></svg></button>
                <button aria-label="Close palette"><svg width="11" height="11"><path d="M1 1l9 9M10 1l-9 9" stroke="#fff" stroke-width="1.200"/></svg></button>
            </header>
            <div class="pick">
                <div class="pick-combo"><select aria-label="Selection"><option>No selection</option></select><i class="tri wide"></i></div>
                <button aria-label="Toggle PICKADD"><svg width="18" height="18"><path d="M5 10.500H1.500v-9h9V4M14 7.500h1.500v8h-9V14" fill="none" stroke="#fff"/><path d="M4.500 4.500h9v9h-9z" fill="none" stroke="#fff"/><path d="M9 6v6M6 9h6" stroke="#e9b66b" stroke-width="1.300"/></svg></button>
                <button aria-label="Select objects"><svg width="18" height="18"><path d="M6 6c-6 3-3 11 3 9" fill="none" stroke="#cfd6de"/><path d="M6 1h9v9H6z" fill="#62b8fb"/><path d="M10 8l6 5-3 1 1 3" fill="none" stroke="#fff"/></svg></button>
                <button aria-label="Quick select"><svg width="18" height="18"><path d="M2.500 2.500v11l3-3 2 4 2-1-2-4h4z" fill="none" stroke="#fff"/><path d="M15 4l-6 6h4l-3 5 7-7h-4z" fill="#f4bd4c"/></svg></button>
            </div>
            <section>
                <h3><button>General<i class="tri wide"></i></button></h3>
                <table>
                    <tr><th>Color</th><td><span class="chip"></span>ByLayer</td></tr>
                    <tr><th>Layer</th><td>A-ROOF-CRANE</td></tr>
                    <tr><th>Linetype</th><td><span class="rule"></span>ByLayer</td></tr>
                    <tr><th>Linetype scale</th><td>100</td></tr>
                    <tr><th>Lineweight</th><td><span class="rule"></span>ByLayer</td></tr>
                    <tr><th>Transparency</th><td>ByLayer</td></tr>
                    <tr><th>Thickness</th><td>0</td></tr>
                </table>
            </section>
            <section>
                <h3><button>View<i class="tri wide"></i></button></h3>
                <table class="readonly">
                    <tr><th>Center X</th><td>246366</td></tr>
                    <tr><th>Center Y</th><td>16608</td></tr>
                    <tr><th>Center Z</th><td>0</td></tr>
                    <tr><th>Height</th><td>306793</td></tr>
                    <tr><th>Width</th><td>1287950</td></tr>
                </table>
            </section>
            <section>
                <h3><button>Misc<i class="tri wide"></i></button></h3>
                <table>
                    <tr><th>Annotation ...</th><td>1:1</td></tr>
                    <tr><th>Ucs icon on</th><td>Yes</td></tr>
                    <tr><th>Ucs icon at ...</th><td>No</td></tr>
                    <tr><th>Ucs per view...</th><td>Yes</td></tr>
                    <tr><th>Ucs name</th><td></td></tr>
                    <tr><th>Visual style</th><td>2D Wireframe</td></tr>
                </table>
            </section>
        </aside>
    </main>

    <footer class="status">
        <div class="coords">1 : 200▼ 12832, -10602, 0</div>
        <div class="toggles">
            <button aria-label="Snap"><svg width="16" height="16"><path d="M1.500 1.500h11v12h-11zM5.500 1v13M9.500 1v13M1 5.500h12M1 9.500h12" fill="none" stroke="#fff"/><path d="M14 1v14H1" fill="none" stroke="#5fb4f5" stroke-width="2"/></svg></button>
            <button aria-label="Grid"><svg width="16" height="16"><path d="M1.500 1.500h13v13h-13z" fill="none" stroke="#fff"/><path d="M5.500 2v12M10.500 2v12M2 5.500h12M2 10.500h12" stroke="#8fccff"/></svg></button>
            <button aria-label="Ortho"><svg width="16" height="16"><path d="M1.500 1v13.500H15" fill="none" stroke="#fff"/><path d="M2 9.500h5V14" fill="none" stroke="#5fb4f5"/></svg></button>
            <button class="on" aria-label="Polar"><svg width="16" height="16"><circle cx="8" cy="8" r="6.500" fill="none" stroke="#fff"/><path d="M5 9.500h10M6 9l6-6v5" fill="none" stroke="#67bcff"/></svg></button>
            <button class="on" aria-label="Object snap"><svg width="16" height="16"><path d="M2.500 2.500h12v12h-12z" fill="none" stroke="#fff"/><path d="M1.500 1.500h4v4h-4z" fill="#50627c" stroke="#b9554e"/></svg></button>
            <button class="on" aria-label="Tracking"><svg width="16" height="16"><path d="M14 2L2 14.500h13" fill="none" stroke="#fff"/><path d="M6.500 6.500h4v4h-4z" fill="none" stroke="#67bcff"/></svg></button>
            <button aria-label="Dynamic UCS"><svg width="16" height="16"><path d="M2.500 2v11.500H14M1 4l1.500-3L4 4M12 12l3 1.500-3 1.500M3 13l6-6" fill="none" stroke="#fff"/><path d="M13 0L8 6h3l-2 4 6-6h-3z" fill="#f5b934"/></svg></button>
            <button class="on" aria-label="Dynamic input"><svg width="16" height="16"><path d="M1 5.500h7M4.500 2v7" stroke="#fff"/><path d="M7.500 9.500h8v3h-8z" fill="none" stroke="#67bcff"/></svg></button>
            <button aria-label="Lineweight display"><svg width="16" height="16"><path d="M2 3h12" stroke="#fff"/><path d="M2 8h12" stroke="#fff" stroke-width="3"/><path d="M2 13h12" stroke="#fff" stroke-width="4"/></svg></button>
            <button class="on" aria-label="Transparency"><svg width="16" height="16"><path d="M1.500 1.500h13v13h-13z" fill="none" stroke="#fff"/><path d="M3 3h10v10H3z" fill="#92c8f8"/></svg></button>
            <button aria-label="Quick properties"><svg width="16" height="16"><path d="M2.500 2.500h11v12h-11z" fill="none" stroke="#fff"/><path d="M2 1h12v3H2z" fill="#fff"/><path d="M4 6.500h2M4 9.500h2M4 12.500h2M7 6.500h5M7 9.500h5M7 12.500h5" stroke="#fff"/></svg></button>
            <button aria-label="Cycling"><svg width="16" height="16"><path d="M1 4.500h7M4.500 1v7" stroke="#fff"/><path d="M7 6h5v5H7z" fill="#fff"/><path d="M9.500 9.500h5v5h-5z" fill="#2f3741" stroke="#67bcff"/></svg></button>
            <button aria-label="Isolines"><svg width="16" height="16"><path d="M1 1.500h14M1 4.500h14M1 14.500h14M1 11.500h14" stroke="#fff"/><path d="M1 8.500h14" stroke="#67bcff" stroke-dasharray="2 1"/></svg></button>
            <button class="on" aria-label="Annotation monitor"><svg width="16" height="16"><path d="M4.500 1.500h10v8h-10z" fill="none" stroke="#fff"/><path d="M5 4.500h10M8.500 2v7M11.500 2v7" stroke="#fff"/><path d="M1 6h9v8H1z" fill="#4c8ac4"/><path d="M1 8.500h9M1 11.500h9M4.500 6v8M7.500 6v8" stroke="#91c8f5"/><path d="M11 14h3V9" fill="none" stroke="#f5c64c"/></svg></button>
        </div>
        <div class="modes">
            <button>Baseline</button>
            <button>Hatch</button>
            <button>Bold</button>
            <button class="on">Grouping</button>
            <button>Dynamic labeling</button>
        </div>
        <div class="right">
            <button class="unit"><svg width="16" height="16"><path d="M1.500 1v14M14.500 1v14M0 1.500h16M0 14.500h16" stroke="#5fa9e2"/><path d="M4.500 5.500h2v5h-2zM9.500 5.500h2v5h-2z" fill="none" stroke="#5fa9e2"/></svg>Unitless<i class="tri wide"></i></button>
            <button class="unit"><svg width="16" height="16"><use href="#scale-man"/></svg>1:1<i class="tri wide"></i></button>
            <button aria-label="Annotation visibility"><svg width="16" height="16"><use href="#scale-man"/><circle cx="13" cy="12" r="3" fill="#f3cb45"/></svg></button>
            <button aria-label="Auto scale"><svg width="16" height="16"><use href="#scale-man"/><path d="M6 0L1 5h3l-2 4 6-5H5z" fill="#c5cad2"/></svg></button>
            <button aria-label="Isolate objects"><svg width="16" height="16"><path d="M5 12.500H.5v-9H6" fill="none" stroke="#fff"/><circle cx="11" cy="5" r="3.500" fill="none" stroke="#fff"/><path d="M9 9.500l3 3-3 3-3-3z" fill="none" stroke="#fff"/></svg></button>
            <button aria-label="Settings"><svg width="16" height="16" color="#63b5f3"><use href="#gear"/></svg></button>
            <button aria-label="Hardware acceleration"><svg width="16" height="16"><path d="M2.500 3.500h11v10h-11zM4.500 0v3M7.500 0v3M10.500 0v3M4.500 14v2M7.500 14v2M10.500 14v2M0 5.500h2M0 11.500h2M14 5.500h2M14 11.500h2" fill="none" stroke="#fff"/><path d="M9 5l-3 4h4l-3 4" fill="none" stroke="#d6dbe1"/></svg></button>
            <button aria-label="Clean screen"><svg width="16" height="16"><path d="M1.500 6V1.500H6M10 1.500h4.500V6M14.500 10v4.500H10M6 14.500H1.500V10M2 2l4 4M14 2l-4 4M2 14l4-4M14 14l-4-4" fill="none" stroke="#fff"/></svg></button>
            <button aria-label="Customization"><svg width="16" height="16"><path d="M1 2.500h14M1 8h14M1 13.500h14" stroke="#6cc0ff" stroke-width="2"/></svg></button>
        </div>
    </footer>
</body>
</html>
```
FILE: styles.css
```css
* {
    margin: 0;
    padding: 0;
    box-sizing: border-box;
}
body {
    display: flex;
    flex-direction: column;
    height: 100vh;
    overflow: hidden;
    background-color: #303841;
    color: #f1f4f7;
    font-family: "Open Sans", "Noto Sans", sans-serif;
    font-size: 12px;
    line-height: 15px;
}
button,
select,
input {
    border: none;
    background: none;
    color: inherit;
    font: inherit;
}
select {
    appearance: none;
    flex: 1;
    min-width: 0;
}
svg {
    display: block;
    flex: none;
}
h1, h2, h3 {
    font-size: 12px;
    font-weight: normal;
}
ul {
    list-style: none;
}
.defs {
    position: absolute;
}
.tri {
    display: block;
    flex: none;
    width: 6px;
    height: 4px;
    background-color: #f1f4f7;
    clip-path: polygon(0 0, 100% 0, 50% 100%);
}
.tri.dim {
    background-color: #7b838b;
}
.tri.up {
    background-color: #303841;
    clip-path: polygon(50% 0, 100% 100%, 0 100%);
}
.tri.wide {
    width: 10px;
    height: 5px;
}

/* title bar */
.titlebar {
    display: flex;
    align-items: center;
    height: 24px;
    padding: 0 5px 0 8px;
}
.quick {
    display: flex;
    align-items: center;
    gap: 8px;
    margin: 0 4px 0 10px;
}
.quick .tri {
    margin: 0 0 0 -5px;
}
.quick .help {
    width: 14px;
    height: 14px;
    border-radius: 50%;
    background-color: #5cb0f4;
    font-weight: bold;
}
.workspace {
    display: flex;
    align-items: center;
    width: 179px;
    height: 22px;
    padding: 0 4px;
    border: 1px solid #20262d;
}
.workspace select {
    margin-left: 1px;
}
.more {
    display: flex;
    flex-direction: column;
    align-items: center;
    gap: 3px;
    width: 18px;
}
.more i:first-child {
    width: 7px;
    height: 1px;
    background-color: #f1f4f7;
}
.titlebar h1 {
    flex: 1;
    margin-left: 9px;
    white-space: nowrap;
}
.win {
    display: flex;
    gap: 15px;
    height: 18px;
    align-items: center;
}

/* menu tabs */
.menu {
    display: flex;
    align-items: center;
    height: 22px;
    padding: 0 6px;
}
.menu button {
    height: 20px;
    padding: 0 9px;
    margin-top: 2px;
}
.menu .active {
    margin-right: 2px;
    padding: 0 8px;
    background-color: #475669;
    color: #3fb3f0;
}
.menu .fold {
    width: 14px;
    height: 13px;
    margin: 0 5px 0 20px;
    padding: 4px;
    background-color: #fff;
}

/* ribbon */
.ribbon {
    display: flex;
    height: 100px;
    margin: 0 1px 0 2px;
    background-color: #475669;
}
.group {
    display: flex;
    flex-direction: column;
    flex: none;
    height: 98px;
    border-right: 1px solid #2b3541;
}
.draw { width: 271px; }
.modify { width: 352px; }
.annotation { width: 195px; }
.layer { width: 287px; }
.block { width: 228px; }
.props { width: 205px; }
.clip {
    width: 158px;
    border-right: none;
}
.tools {
    display: flex;
    height: 79px;
    padding-top: 4px;
}
.group h2 {
    display: flex;
    align-items: center;
    justify-content: center;
    gap: 6px;
    height: 18px;
}
.big {
    display: flex;
    flex-direction: column;
    align-items: center;
    height: 72px;
    padding-top: 3px;
    white-space: nowrap;
}
.big svg {
    height: 32px;
    margin-bottom: 4px;
    overflow: visible;
}
.big .tri {
    margin-top: 3px;
}
.w38 { width: 38px; }
.w42 { width: 42px; }
.w46 { width: 46px; }
.w48 { width: 48px; }
.w52 { width: 52px; }
.w58 { width: 58px; }
.w60 { width: 60px; }
.w72 { width: 72px; }
.w75 { width: 75px; }
.w84 { width: 84px; }
.stack {
    display: flex;
    flex-direction: column;
    margin-left: 6px;
}
.modify .w75,
.modify .w75 + .stack {
    margin-left: 0;
}
.stack button {
    display: flex;
    align-items: center;
    gap: 5px;
    height: 24px;
    white-space: nowrap;
}
.stack button .tri {
    margin-left: 1px;
}
.pairs {
    width: 36px;
}
.split {
    width: 8px;
    height: 52px;
    padding-left: 1px;
    margin-top: 27px;
}
.annotation .tools {
    padding-left: 8px;
}
.layer .stack,
.props .stack {
    margin-left: 1px;
}
.iconrow {
    display: flex;
}
.iconrow button {
    width: 24px;
    padding-left: 4px;
}
.iconrow .label {
    width: auto;
}
.combo {
    display: flex;
    align-items: center;
    width: 180px;
    height: 22px;
    padding: 0 4px;
    border: 1px solid #262e38;
    background-color: #383e45;
}
.layers-combo {
    gap: 4px;
    width: 208px;
    margin-top: 1px;
}
.swatch {
    width: 14px;
    height: 14px;
    border: 1px solid #000;
    background-color: #fff;
}
.swatch.wide {
    width: 16px;
    height: 16px;
    margin-right: 4px;
    border: none;
}
.line {
    width: 64px;
    height: 1px;
    margin: 0 2px;
    background-color: #fff;
}
.proprow {
    display: flex;
    align-items: center;
    gap: 2px;
    height: 24px;
    padding-left: 3px;
}
.props h2 {
    position: relative;
}
.corner {
    position: absolute;
    right: 5px;
    bottom: 7px;
    width: 5px;
    height: 5px;
    background-color: #f1f4f7;
    clip-path: polygon(100% 0, 100% 100%, 0 100%);
}

/* drawing and layout tabs */
.tabs {
    display: flex;
    align-items: center;
    height: 29px;
    padding: 0 17px 3px;
    background-color: #303841;
}
.burger {
    width: 16px;
    height: 10px;
    border-top: 2px solid #dfe4e9;
    border-bottom: 2px solid #dfe4e9;
    background: linear-gradient(#dfe4e9, #dfe4e9) center / 100% 2px no-repeat;
}
.slash {
    width: 1px;
    height: 14px;
    background-color: #77818c;
    transform: skewX(-18deg);
}
.burger + .slash {
    margin-left: 22px;
}
.tab {
    display: flex;
    align-items: center;
    gap: 7px;
    height: 22px;
    padding: 0 11px;
}
.tab + .slash {
    margin-left: 10px;
}
.tab.active {
    margin-left: 5px;
    padding: 0 9px 0 16px;
    background-color: #4d6085;
    clip-path: polygon(8px 0, 100% 0, calc(100% - 8px) 100%, 0 100%);
    font-weight: bold;
}
.plus {
    width: 12px;
    height: 12px;
    margin: 0 15px 0 10px;
    background:
        linear-gradient(#dfe4e9, #dfe4e9) center / 100% 2px no-repeat,
        linear-gradient(#dfe4e9, #dfe4e9) center / 2px 100% no-repeat;
}
.layouts {
    height: 25px;
    padding: 0 15px 5px;
}
.layouts .tab {
    height: 20px;
    padding: 0 8px;
}
.layouts .active {
    margin-left: 16px;
    padding: 0 19px;
}
.layouts .plus {
    width: 11px;
    height: 11px;
    margin: 0 7px;
}
.layouts .tab + .slash {
    margin-left: 4px;
}

/* work area */
main {
    display: flex;
    flex: 1;
    min-height: 0;
}
.work {
    display: flex;
    flex-direction: column;
    flex: 1;
    min-width: 0;
}
.view {
    display: flex;
    flex: 1;
    min-height: 0;
}
.side {
    width: 180px;
    margin-bottom: 5px;
    padding: 4px 6px 0 4px;
    border-right: 2px solid #8c9096;
    background-color: #f0f0f0;
    box-shadow: inset -3px 0 #fff;
}
.side button {
    display: flex;
    align-items: center;
    gap: 4px;
    width: 168px;
    height: 19px;
    padding: 0 1px;
    border-top: 1px solid #fff;
    border-left: 1px solid #fff;
    border-right: 2px solid #8b8b8b;
    border-bottom: 2px solid #7a7a7a;
    background-color: #f0f0f0;
    color: #111;
    white-space: nowrap;
}
.side button::before {
    content: "";
    flex: none;
    width: 13px;
    height: 13px;
    border: 1px dashed #a5a5a5;
    border-radius: 50%;
    background: conic-gradient(from 225deg at 100% 50%, #222 90deg, #fff 90deg) 4px 50% / 4px 8px no-repeat #fff;
}
.model {
    display: flex;
    flex-direction: column;
    flex: 1;
    min-width: 0;
}
.canvas {
    position: relative;
    flex: 1;
    overflow: hidden;
    background-color: #212830;
}
.canvas-head {
    display: flex;
    justify-content: space-between;
    padding: 4px 9px 0 7px;
    font-family: Roboto, "Open Sans", sans-serif;
    font-size: 11px;
}
.docwin {
    display: flex;
    gap: 8px;
    padding-top: 3px;
}
.drawing {
    position: absolute;
    left: 0;
    top: 0;
}
.command {
    display: flex;
    height: 148px;
    padding-left: 1px;
    font-family: "DejaVu Sans Mono", monospace;
    font-size: 13px;
    line-height: 16px;
    color: #b9bdc1;
}
.grip {
    display: flex;
    justify-content: center;
    width: 21px;
    padding-top: 4px;
    background-color: #434e5b;
}
.console {
    display: flex;
    flex-direction: column;
    flex: 1;
    background-color: #2b2f31;
}
.log {
    flex: 1;
    padding-top: 1px;
}
.prompt {
    display: flex;
    gap: 11px;
    height: 21px;
    padding-top: 1px;
    border-top: 1px solid #666b6f;
}
.prompt label {
    padding-top: 1px;
}
.prompt input {
    flex: 1;
    height: 15px;
    border-left: 1px solid #fff;
    outline: none;
}

/* properties palette */
.palette {
    width: 221px;
    margin: 4px 2px 2px 6px;
    background-color: #434d59;
    color: #e4e8ec;
}
.palette header {
    display: flex;
    align-items: center;
    gap: 8px;
    height: 21px;
    padding: 0 8px 0 18px;
    background-color: #535f69;
}
.palette header h2 {
    flex: 1;
    font-size: 11px;
}
.pick {
    display: flex;
    align-items: center;
    gap: 5px;
    height: 35px;
    padding: 0 10px 0 6px;
}
.pick-combo {
    display: flex;
    align-items: center;
    width: 134px;
    height: 23px;
    padding: 0 3px;
    border: 1px solid #4e5965;
}
.palette section {
    margin: 0 18px 5px 7px;
}
.palette h3 button {
    display: flex;
    align-items: center;
    justify-content: space-between;
    width: 100%;
    height: 25px;
    padding: 0 5px 1px 4px;
    border: 1px solid #505b66;
    background-color: #383e43;
    font-weight: bold;
}
.palette table {
    width: 181px;
    margin: -1px 0 0 15px;
    border-collapse: collapse;
    table-layout: fixed;
    font-size: 11px;
}
.palette th,
.palette td {
    height: 25px;
    border: 1px solid #53606c;
    font-weight: normal;
    text-align: left;
    white-space: nowrap;
}
.palette th {
    width: 78px;
    padding: 4px 0 0 4px;
}
.palette td {
    padding-left: 4px;
}
.readonly td {
    color: #929ba4;
}
.chip {
    display: inline-block;
    width: 10px;
    height: 10px;
    margin-right: 4px;
    border: 1px solid #000;
    background-color: #fff;
}
.rule {
    display: inline-block;
    width: 45px;
    height: 1px;
    margin-right: 4px;
    background-color: #e4e8ec;
    vertical-align: middle;
}

/* status bar */
.status {
    display: flex;
    align-items: center;
    height: 27px;
    padding: 1px 4px 0 3px;
    background-color: #2f3741;
    font-family: "DejaVu Sans Mono", monospace;
    font-size: 10px;
}
.coords {
    width: 308px;
}
.toggles {
    display: flex;
    gap: 4px;
}
.toggles button {
    width: 20px;
    height: 21px;
    padding: 2px;
}
.toggles .on,
.modes .on {
    border: 1px solid #6fb0e6;
    background-color: #4a6788;
    color: #fff;
}
.toggles .on {
    padding: 1px;
}
.modes {
    display: flex;
    flex: 1;
    gap: 4px;
    margin-left: 9px;
    color: #97a0a9;
}
.modes button {
    height: 21px;
    padding: 0 5px;
}
.modes .on {
    padding: 0 4px;
}
.right {
    display: flex;
    align-items: center;
    gap: 6px;
    color: #97a0a9;
}
.unit {
    display: flex;
    align-items: center;
    gap: 4px;
    margin-right: 4px;
}
.unit + .unit {
    margin-right: 3px;
}
```
